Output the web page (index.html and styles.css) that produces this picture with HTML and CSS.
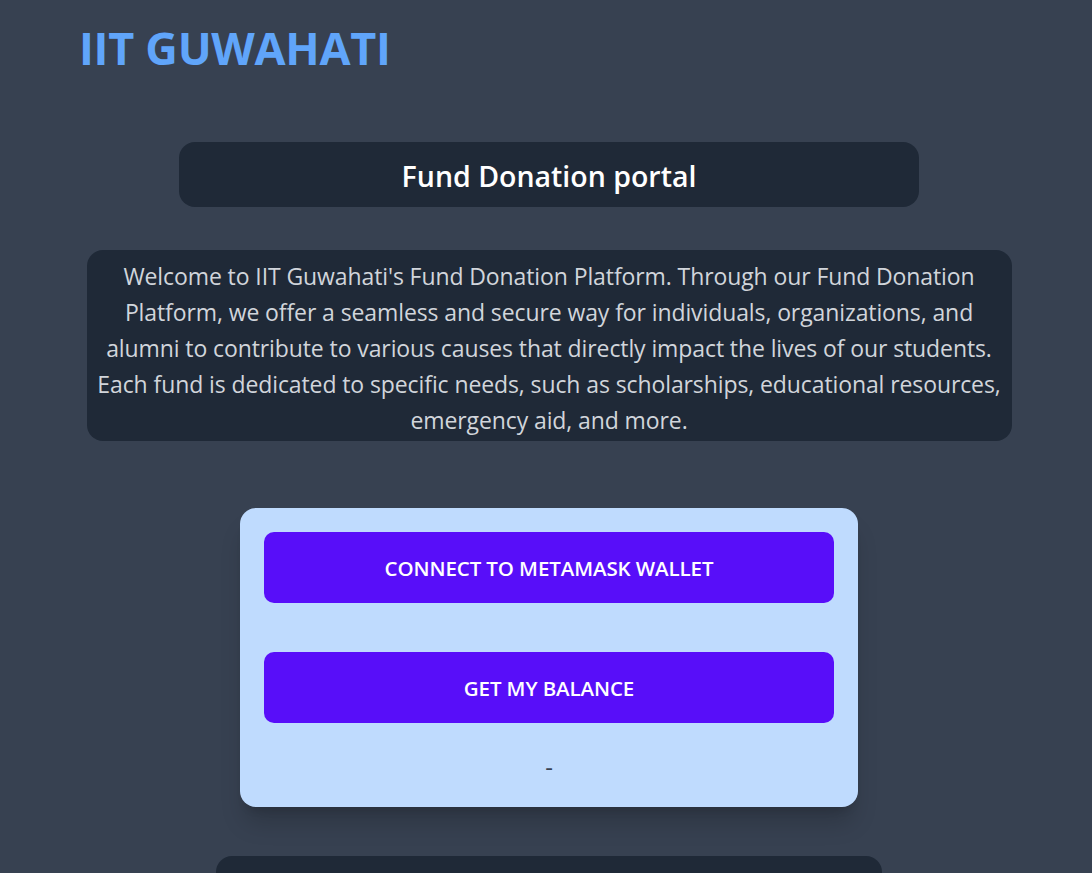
FILE: index.html
```html
<!DOCTYPE html>
<html lang="en">
<head>
<meta charset="utf-8">
<title>IIT Guwahati - Fund Donation portal</title>
<link rel="stylesheet" href="styles.css">
</head>
<body>
<header class="site-header">
  <h1 class="brand">IIT GUWAHATI</h1>
</header>
<main class="main">
  <div class="heading-box">
    <h2 class="heading">Fund Donation portal</h2>
  </div>
  <div class="intro-box">
    <p class="intro">Welcome to IIT Guwahati's Fund Donation Platform. Through our Fund Donation Platform, we offer a seamless and secure way for individuals, organizations, and alumni to contribute to various causes that directly impact the lives of our students. Each fund is dedicated to specific needs, such as scholarships, educational resources, emergency aid, and more.</p>
  </div>
  <section class="wallet-card">
    <button class="action-btn" type="button">CONNECT TO METAMASK WALLET</button>
    <button class="action-btn" type="button">GET MY BALANCE</button>
    <p class="balance">-</p>
  </section>
  <section class="funds-box"></section>
</main>
</body>
</html>
```
FILE: styles.css
```css
* { box-sizing: border-box; }
html, body { margin: 0; padding: 0; }
body {
  background: #374151;
  font-family: "Open Sans", "Noto Sans", sans-serif;
  color: #ffffff;
  min-height: 100vh;
  overflow: hidden;
}
.site-header {
  padding: 24px 0 0 79px;
}
.brand {
  margin: 0;
  font-size: 45px;
  line-height: 48px;
  font-weight: 700;
  color: #60a5fa;
  letter-spacing: -0.3px;
}
.main {
  display: flex;
  flex-direction: column;
  align-items: center;
  padding: 70px 0 0 6px;
}
.heading-box {
  width: 740px;
  height: 65px;
  background: #1f2937;
  border-radius: 16px;
  display: flex;
  align-items: center;
  justify-content: center;
}
.heading {
  margin: 0;
  font-size: 28.5px;
  line-height: 36px;
  font-weight: 600;
  color: #ffffff;
  padding-top: 3px;
}
.intro-box {
  width: 925px;
  margin-top: 43px;
  background: #1f2937;
  border-radius: 16px;
  padding: 8px 10px 3px;
}
.intro {
  margin: 0;
  text-align: center;
  font-size: 23px;
  line-height: 36px;
  color: #d1d5db;
  letter-spacing: -0.1px;
}
.wallet-card {
  width: 618px;
  margin-top: 67px;
  background: #bfdbfe;
  border-radius: 16px;
  padding: 24px 24px 24px;
  display: flex;
  flex-direction: column;
  gap: 49px;
  box-shadow: 0 20px 25px -5px rgba(0,0,0,0.18), 0 8px 10px -6px rgba(0,0,0,0.14);
}
.action-btn {
  display: block;
  width: 100%;
  height: 71px;
  border: none;
  border-radius: 10px;
  background: #580ef9;
  color: #ffffff;
  font-family: "Open Sans", "Noto Sans", sans-serif;
  font-size: 20.5px;
  font-weight: 600;
  letter-spacing: -0.1px;
  cursor: pointer;
}
.balance {
  margin: -25px 0 0;
  height: 36px;
  padding-top: 3px;
  line-height: 33px;
  text-align: center;
  font-size: 24px;
  color: #374151;
}
.funds-box {
  width: 666px;
  height: 160px;
  margin-top: 49px;
  background: #1f2937;
  border-radius: 16px;
}
```
